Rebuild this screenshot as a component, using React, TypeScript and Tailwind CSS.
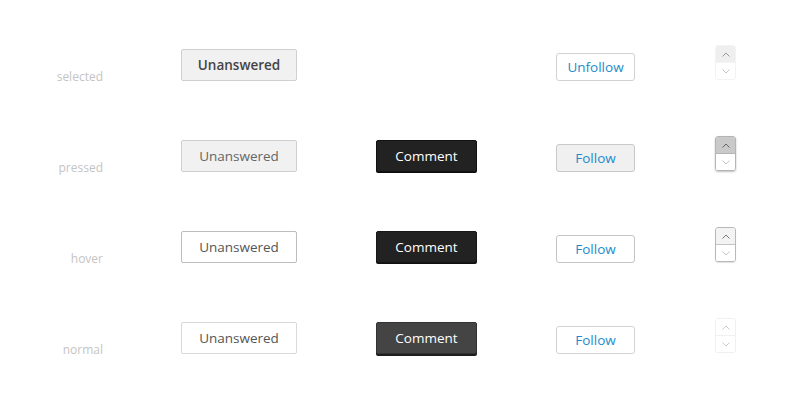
import type { ReactNode } from 'react'

type State = 'selected' | 'pressed' | 'hover' | 'normal'

const states: State[] = ['selected', 'pressed', 'hover', 'normal']

const unansweredStyles: Record<State, string> = {
  selected: 'border-[#cfcfcf] bg-[#f1f1f1] font-semibold text-[#444]',
  pressed: 'border-[#cfcfcf] bg-[#f1f1f1] text-[#666]',
  hover: 'border-[#bdbdbd] bg-white text-[#555]',
  normal: 'border-[#d9d9d9] bg-white text-[#555]',
}

const commentStyles: Record<State, string> = {
  selected: '',
  pressed: 'border-[#111] bg-[#222] shadow-[0_1px_0_#0d0d0d]',
  hover: 'border-[#161616] bg-[#222] shadow-[0_1px_0_#111]',
  normal: 'border-[#333] bg-[#444] shadow-[0_2px_0_#1e1e1e]',
}

const followStyles: Record<State, string> = {
  selected: 'border-[#d2d2d2] bg-white',
  pressed: 'border-[#c8c8c8] bg-[#f0f0f0]',
  hover: 'border-[#c4c4c4] bg-white',
  normal: 'border-[#d2d2d2] bg-white',
}

function Chevron({ up, color }: { up?: boolean; color: string }) {
  return (
    <svg width="8" height="5" viewBox="0 0 8 5" fill="none" aria-hidden="true">
      <polyline
        points={up ? '0.5,4.5 4,1 7.5,4.5' : '0.5,0.5 4,4 7.5,0.5'}
        stroke={color}
        strokeWidth="1"
      />
    </svg>
  )
}

function Spinner({ state }: { state: State }) {
  const frame: Record<State, string> = {
    selected: 'border-[#f3f3f3]',
    pressed: 'border-[#b4b4b4] shadow-[0_1px_2px_rgba(0,0,0,0.25)]',
    hover: 'border-[#b8b8b8] shadow-[0_1px_1px_rgba(0,0,0,0.12)]',
    normal: 'border-[#f0f0f0]',
  }
  const top: Record<State, string> = {
    selected: 'bg-[#efefef]',
    pressed: 'bg-[#c9c9c9]',
    hover: 'bg-[#f3f3f3]',
    normal: 'bg-white',
  }
  const divider: Record<State, string> = {
    selected: 'border-[#f3f3f3]',
    pressed: 'border-[#b4b4b4]',
    hover: 'border-[#c4c4c4]',
    normal: 'border-[#f0f0f0]',
  }
  const upColor = state === 'pressed' ? '#666' : state === 'hover' ? '#777' : state === 'selected' ? '#999' : '#ccc'
  const downColor = state === 'normal' ? '#ccc' : '#c4c4c4'

  return (
    <div className={`flex h-[35px] w-[21px] flex-col overflow-hidden rounded-[3px] border ${frame[state]}`}>
      <div className={`flex flex-1 items-center justify-center border-b ${top[state]} ${divider[state]}`}>
        <Chevron up color={upColor} />
      </div>
      <div className="flex flex-1 items-center justify-center bg-white">
        <Chevron color={downColor} />
      </div>
    </div>
  )
}

function Cell({ children }: { children: ReactNode }) {
  return <div className="flex items-end">{children}</div>
}

export default function App() {
  return (
    <div
      className="flex h-[400px] w-[800px] flex-col gap-y-[55px] bg-white pt-[45px]"
      style={{ fontFamily: '"Open Sans", "DejaVu Sans", sans-serif' }}
    >
      {states.map((state) => (
        <div
          key={state}
          className="grid h-[36px] grid-cols-[102px_116px_101px_79px_22px] gap-x-[79px] items-end"
        >
          <div className="-mr-px -mb-[4px] text-right text-[12px] leading-4 text-[#c4c4c4]">{state}</div>

          <Cell>
            <button
              type="button"
              className={`h-[32px] w-[116px] rounded-[2px] border text-[13.5px] ${unansweredStyles[state]}`}
            >
              Unanswered
            </button>
          </Cell>

          <Cell>
            {state !== 'selected' ? (
              <button
                type="button"
                className={`h-[32px] w-[101px] rounded-[2px] border text-[13.5px] text-white ${commentStyles[state]}`}
              >
                Comment
              </button>
            ) : null}
          </Cell>

          <Cell>
            <button
              type="button"
              className={`h-[28px] w-[79px] rounded-[3px] border text-[13.5px] text-[#1a8ccc] ${followStyles[state]}`}
            >
              {state === 'selected' ? 'Unfollow' : 'Follow'}
            </button>
          </Cell>

          <div className="flex items-end pb-[1px] pl-px">
            <Spinner state={state} />
          </div>
        </div>
      ))}
    </div>
  )
}
